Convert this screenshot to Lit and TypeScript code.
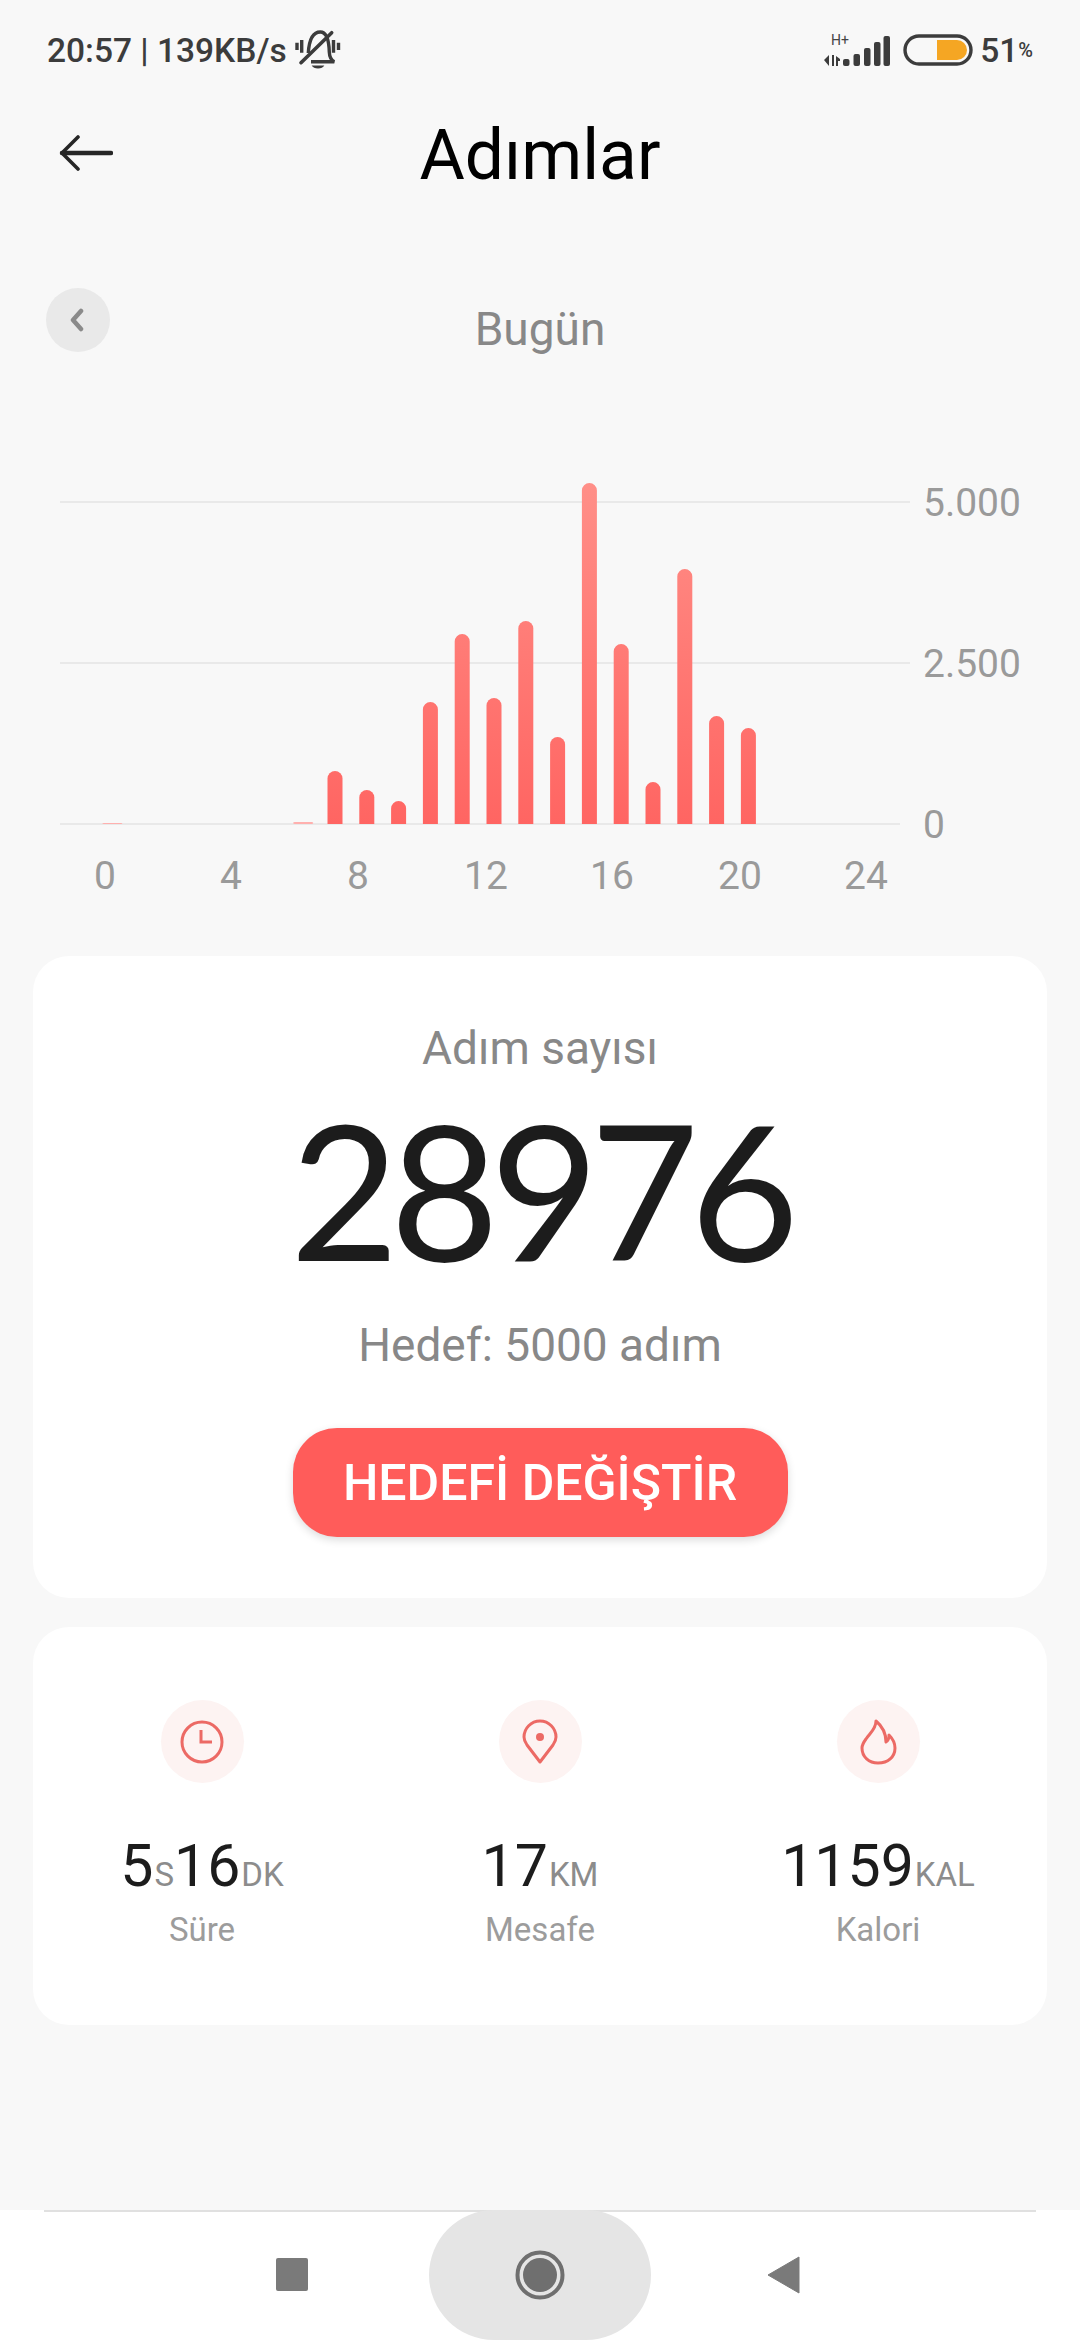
import { LitElement, html, css, svg } from 'lit';
import { customElement } from 'lit/decorators.js';

// hour -> top of the bar in page pixels, baseline is 824
const BARS: [number, number][] = [
  [0, 823], [6, 822], [7, 771], [8, 790], [9, 801], [10, 702], [11, 634], [12, 698],
  [13, 621], [14, 737], [15, 483], [16, 644], [17, 782], [18, 569], [19, 716], [20, 728],
];
const CHART_TOP = 460;
const BASE = 824;

@customElement('step-chart')
export class StepChart extends LitElement {
  static styles = css`
    :host { display: block; height: 460px; }
    svg { display: block; }
    text { font-family: Roboto, sans-serif; font-size: 39px; fill: #9a9a9a; }
    .grid { stroke: #e9e9e9; stroke-width: 2; }
  `;

  private _bar(hour: number, top: number) {
    const cx = 335 + (hour - 7) * 31.8;
    const w = 15;
    const y = top - CHART_TOP;
    const b = BASE - CHART_TOP;
    if (b - y < 4) {
      return svg`<rect x=${cx - 10} y=${y} width="20" height=${b - y} rx="1.5" fill="#ffb0ae"></rect>`;
    }
    return svg`<path fill="url(#bar)" d="M${cx - w / 2} ${b}V${y + w / 2}a${w / 2} ${w / 2} 0 0 1 ${w} 0V${b}z"></path>`;
  }

  render() {
    const rows: [number, number, string][] = [[42, 910, '5.000'], [203, 910, '2.500'], [364, 900, '0']];
    const hours = [[105, '0'], [231, '4'], [358, '8'], [486, '12'], [612, '16'], [740, '20'], [866, '24']];
    return html`
      <svg width="1080" height="460" viewBox="0 0 1080 460">
        <defs>
          <linearGradient id="bar" gradientUnits="userSpaceOnUse" x1="0" y1="23" x2="0" y2="364">
            <stop offset="0" stop-color="#ff8f88"></stop>
            <stop offset="1" stop-color="#ff6562"></stop>
          </linearGradient>
        </defs>
        ${rows.map(([y, x2]) => svg`<line class="grid" x1="60" x2=${x2} y1=${y} y2=${y}></line>`)}
        ${rows.map(([y, , label]) => svg`<text x="923" y=${y + 14}>${label}</text>`)}
        ${BARS.map(([h, t]) => this._bar(h, t))}
        ${hours.map(([x, label]) => svg`<text x=${x} y="429" text-anchor="middle">${label}</text>`)}
      </svg>
    `;
  }
}

@customElement('app-root')
export class AppRoot extends LitElement {
  static styles = css`
    :host {
      display: block;
      width: 1080px;
      height: 2340px;
      background: #f8f8f8;
      font-family: Roboto, sans-serif;
      overflow: hidden;
    }
    .page { display: flex; flex-direction: column; height: 2340px; }

    .status {
      display: flex;
      align-items: center;
      justify-content: space-between;
      height: 50px;
      padding: 25px 47px 0;
      color: #3c3c3c;
      font-size: 33.5px;
      font-weight: 500;
    }
    .status-left, .status-right { display: flex; align-items: center; }
    .bell { margin-left: 8px; }
    .signal { margin-right: 12px; }
    .batt { margin-right: 7px; }
    .pct { font-size: 20px; align-self: flex-end; padding-bottom: 8px; }

    .appbar {
      position: relative;
      display: flex;
      justify-content: center;
      align-items: center;
      height: 82px;
      margin-top: 40px;
    }
    .title { font-size: 69.5px; color: #000; line-height: 82px; }
    .back-arrow { position: absolute; left: 59px; top: 20px; }

    .day { display: flex; align-items: center; justify-content: center; position: relative; height: 64px; margin-top: 91px; }
    .day-label { font-size: 46px; color: #888; padding-top: 18px; }
    .prev {
      position: absolute;
      left: 46px;
      top: 0;
      width: 64px;
      height: 64px;
      padding-right: 2px;
      box-sizing: border-box;
      border-radius: 50%;
      background: #e9e9e9;
      display: flex;
      align-items: center;
      justify-content: center;
    }
    step-chart { margin-top: 108px; }

    .card { background: #fff; border-radius: 36px; margin: 0 33px; }
    .goal {
      height: 642px;
      margin-top: 36px;
      display: flex;
      flex-direction: column;
      align-items: center;
    }
    .goal-label { font-size: 46px; color: #888; margin-top: 67px; line-height: 50px; }
    .count {
      font-family: Lato, sans-serif;
      font-weight: 400;
      font-size: 188px;
      line-height: 200px;
      letter-spacing: -9px;
      color: #1c1c1c;
      margin-top: 15px;
    }
    .goal-target { font-size: 46px; color: #888; line-height: 50px; margin-top: 32px; }
    .change {
      margin-top: 58px;
      width: 495px;
      height: 109px;
      border: none;
      border-radius: 44px;
      background: #ff5c5a;
      color: #fff;
      font-family: Roboto, sans-serif;
      font-size: 50px;
      font-weight: 500;
      box-shadow: 0 3px 8px rgba(0, 0, 0, 0.14);
      padding: 0;
    }

    .stats {
      height: 398px;
      margin-top: 29px;
      display: grid;
      grid-template-columns: repeat(3, 338px);
    }
    .stat { display: flex; flex-direction: column; align-items: center; padding-top: 73px; }
    .stat-icon {
      width: 83px;
      height: 83px;
      border-radius: 50%;
      background: #fdf3f2;
      display: flex;
      align-items: center;
      justify-content: center;
    }
    .stat-value { margin-top: 48px; line-height: 70px; font-size: 59px; color: #1c1c1c; white-space: nowrap; }
    .stat-value small { font-size: 33px; color: #8c8c8c; margin-left: 1px; }
    .stat-label { font-size: 33px; color: #9c9c9c; line-height: 40px; }

    .nav {
      margin-top: auto;
      height: 130px;
      background: #fff;
      position: relative;
      display: flex;
      align-items: center;
      justify-content: center;
    }
    .nav::before {
      content: '';
      position: absolute;
      left: 44px;
      right: 44px;
      top: 0;
      height: 2px;
      background: #e0e0e0;
    }
    .home {
      position: relative;
      width: 222px;
      height: 130px;
      border-radius: 65px;
      background: #e5e5e5;
      display: flex;
      align-items: center;
      justify-content: center;
    }
    .recent { position: absolute; left: 276px; top: 48px; width: 32px; height: 33px; border-radius: 2px; background: #7a7a7a; }
    .nav-back { position: absolute; left: 767px; top: 46px; }
  `;

  render() {
    return html`
      <div class="page">
        <div class="status">
          <div class="status-left">
            <span>20:57 | 139KB/s</span>
            <svg class="bell" width="46" height="40" viewBox="0 0 46 40" fill="none" stroke="#3c3c3c" stroke-width="3.4">
              <path d="M13.3 23C14 12 17 2 25.3 2 32 2 34 12 34.3 22c.2 5 1.5 8 5 9.7H16"></path>
              <path d="M6 32.7 36.7 2.7" stroke-linecap="round" stroke-width="3.6"></path>
              <path d="M16.7 35.6h12.600c-1 2-3.300 3-6.300 3s-5.300-1-6.300-3z" fill="#3c3c3c" stroke="none"></path>
              <path d="M2 12.700v7.300M6.700 10v12.700M38.500 10v12.700M43.500 12.700v7.300"></path>
            </svg>
          </div>
          <div class="status-right">
            <svg class="signal" width="68" height="34" viewBox="0 0 68 34" fill="#3c3c3c">
              <text x="8" y="12" font-family="Roboto, sans-serif" font-size="14" font-weight="400" fill="#444">H+</text>
              <path d="M6 22v11L1 27zM9 22h2v11H9zM13 23l4 3v2h-2v5h-2z"></path>
              <rect x="20" y="26" width="6.500" height="7" rx="2"></rect>
              <rect x="30.500" y="21" width="6.500" height="12" rx="2"></rect>
              <rect x="41" y="15" width="6.500" height="18" rx="2"></rect>
              <rect x="51" y="9" width="6.500" height="24" rx="2"></rect>
              <rect x="60.500" y="3" width="6.500" height="30" rx="2"></rect>
            </svg>
            <svg class="batt" width="70" height="32" viewBox="0 0 70 32">
              <rect x="2" y="2" width="66" height="28" rx="14" fill="none" stroke="#3c3c3c" stroke-width="3.400"></rect>
              <path d="M34 6h20a9.500 9.500 0 0 1 0 20H34z" fill="#f5a623"></path>
            </svg>
            <span>51</span><span class="pct">%</span>
          </div>
        </div>

        <div class="appbar">
          <svg class="back-arrow" width="54" height="38" viewBox="0 0 54 38" fill="none" stroke="#262626" stroke-linecap="round" stroke-linejoin="round">
            <path d="M3 18h49" stroke-width="4.500"></path>
            <path d="M19 2 3 18l16 16" stroke-width="3.600"></path>
          </svg>
          <span class="title">Adımlar</span>
        </div>

        <div class="day">
          <div class="prev">
            <svg width="14" height="24" viewBox="0 0 14 24" fill="none" stroke="#8a8a8a" stroke-width="4.500" stroke-linecap="round" stroke-linejoin="round">
              <path d="M11 3 3 12l8 9"></path>
            </svg>
          </div>
          <span class="day-label">Bugün</span>
        </div>

        <step-chart></step-chart>

        <div class="card goal">
          <div class="goal-label">Adım sayısı</div>
          <div class="count">28976</div>
          <div class="goal-target">Hedef: 5000 adım</div>
          <button class="change">HEDEFİ DEĞİŞTİR</button>
        </div>

        <div class="card stats">
          <div class="stat">
            <div class="stat-icon">
              <svg width="44" height="44" viewBox="0 0 44 44" fill="none" stroke="#ec6a65" stroke-width="3">
                <circle cx="22" cy="22" r="20"></circle>
                <path d="M21 10v12h11"></path>
              </svg>
            </div>
            <div class="stat-value">5<small>S</small>16<small>DK</small></div>
            <div class="stat-label">Süre</div>
          </div>
          <div class="stat">
            <div class="stat-icon">
              <svg width="36" height="45" viewBox="0 0 36 45" fill="none" stroke="#ec6a65" stroke-width="3">
                <path d="M18 43 5 26C2.500 22.500 2 20 2 18a16 16 0 0 1 32 0c0 2-.5 4.500-3 8z" stroke-linejoin="round"></path>
                <circle cx="18" cy="18" r="4" fill="#ec6a65" stroke="none"></circle>
              </svg>
            </div>
            <div class="stat-value">17<small>KM</small></div>
            <div class="stat-label">Mesafe</div>
          </div>
          <div class="stat">
            <div class="stat-icon">
              <svg width="37" height="46" viewBox="0 0 37 46" fill="none" stroke="#ec6a65" stroke-width="3" stroke-linejoin="round">
                <path d="M16 2C16 10 10 14 6 20 3 24 2 26 2 29 2 38 9 44 18 44 28 44 35 38 35 29 35 24 32 19 29 16 29 19 28 22 26 23 26 14 22 7 16 2Z"></path>
              </svg>
            </div>
            <div class="stat-value">1159<small>KAL</small></div>
            <div class="stat-label">Kalori</div>
          </div>
        </div>

        <div class="nav">
          <div class="recent"></div>
          <div class="home">
            <svg width="52" height="52" viewBox="0 0 52 52">
              <circle cx="26" cy="26" r="22.500" fill="none" stroke="#6f6f6f" stroke-width="4"></circle>
              <circle cx="26" cy="26" r="17" fill="#6f6f6f"></circle>
            </svg>
          </div>
          <svg class="nav-back" width="33" height="38" viewBox="0 0 33 38">
            <path d="M32 1v36L1 19z" fill="#7a7a7a" stroke="#7a7a7a" stroke-linejoin="round"></path>
          </svg>
        </div>
      </div>
    `;
  }
}
